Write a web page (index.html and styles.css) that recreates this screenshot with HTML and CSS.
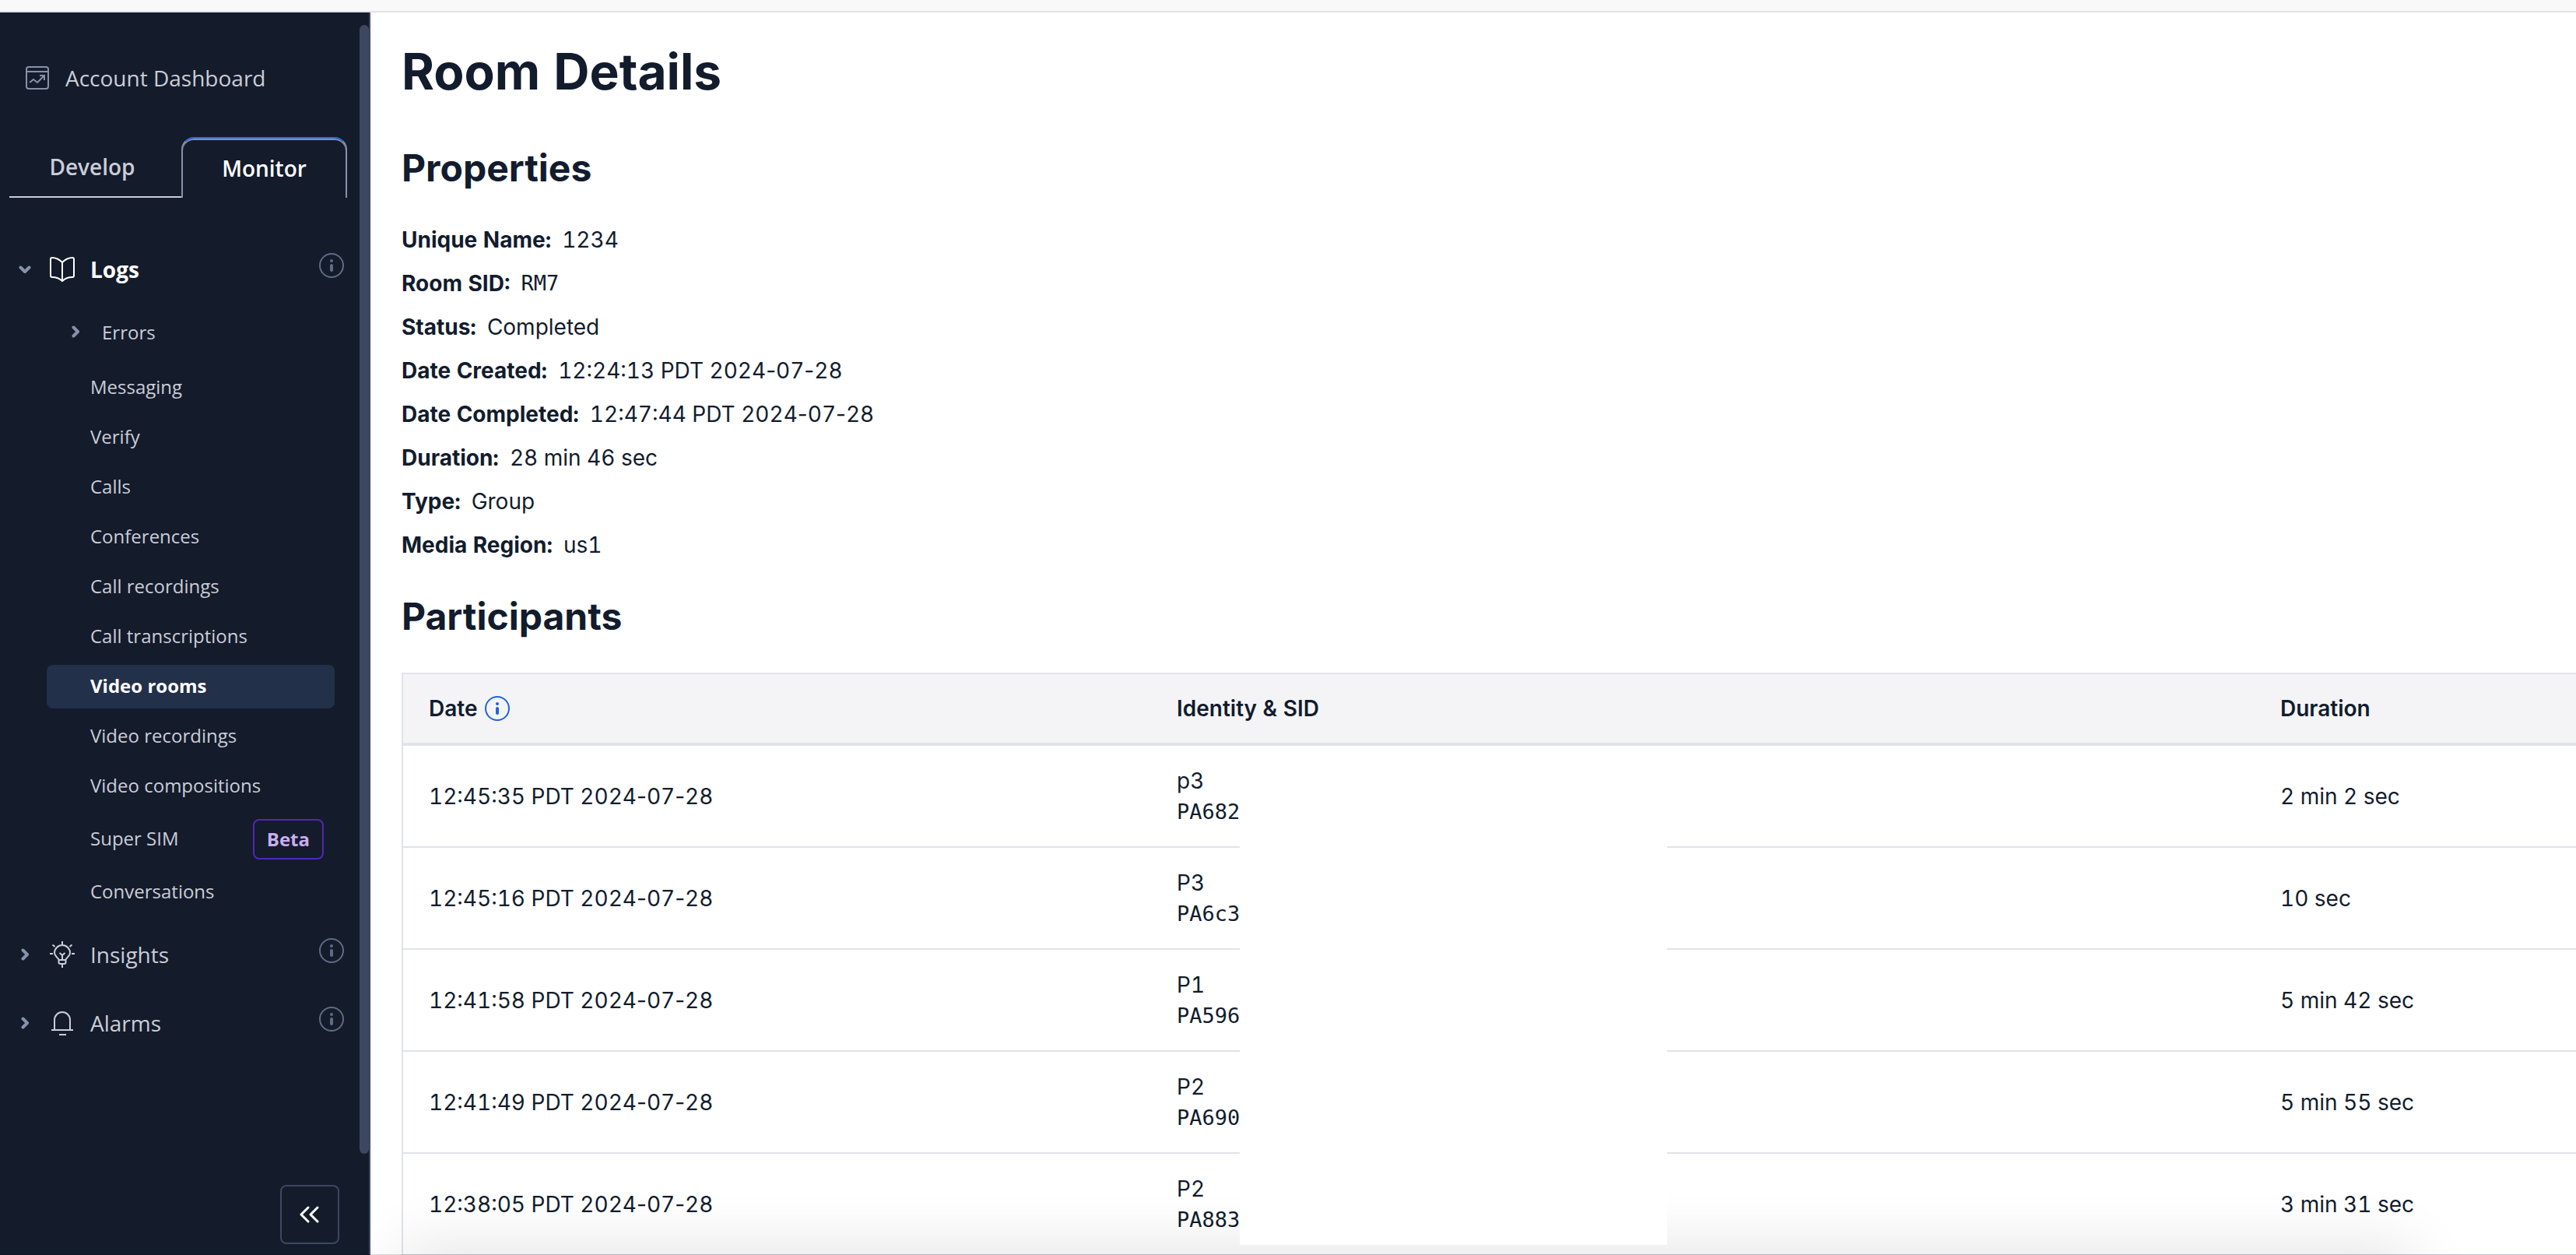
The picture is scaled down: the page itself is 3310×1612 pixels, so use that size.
FILE: index.html
```html
<!DOCTYPE html>
<html lang="en">
<head>
<meta charset="utf-8">
<title>Room Details</title>
<link rel="stylesheet" href="styles.css">
</head>
<body>
<svg class="sprite" aria-hidden="true">
  <symbol id="chevron" viewBox="0 0 16 16"><path d="M5.500 2.500L11 8l-5.500 5.500" fill="none" stroke="currentColor" stroke-width="4" stroke-linecap="round" stroke-linejoin="round"/></symbol>
  <symbol id="info" viewBox="0 0 32 32"><circle cx="16" cy="16" r="15" fill="none" stroke="currentColor" stroke-width="2"/><circle cx="16" cy="10" r="2" fill="currentColor"/><rect x="14" y="14" width="4" height="10" rx="2" fill="currentColor"/></symbol>
</svg>
<header class="topbar"></header>
<div class="layout">
  <nav class="sidebar">
    <a class="dashboard" href="#">
      <svg class="icon-dashboard" viewBox="0 0 30 30" fill="none" stroke="currentColor" stroke-width="2"><rect x="1" y="1" width="28" height="28" rx="3"/><path d="M1 7h28M5 21l5-4 5 4 9-9M18 12h6v6"/></svg>
      Account Dashboard
    </a>
    <div class="tabs" role="tablist">
      <button class="tab" role="tab">Develop</button>
      <button class="tab tab-active" role="tab" aria-selected="true">Monitor</button>
    </div>
    <div class="group group-open">
      <button class="group-name"><svg class="chevron chevron-down"><use href="#chevron"/></svg>
        <svg class="group-icon" viewBox="0 0 32 32" fill="none" stroke="currentColor" stroke-width="2" stroke-linejoin="round"><path d="M16 7C12 3 7 1 3 1Q1 1 1 3v21q0 2 2 2c5 0 9 1 13 5 4-4 8-5 13-5q2 0 2-2V3q0-2-2-2c-4 0-9 2-13 6zv24"/></svg>
        Logs</button>
      <button class="info" aria-label="About logs"><svg><use href="#info"/></svg></button>
    </div>
    <ul class="links">
      <li><button class="sub"><svg class="chevron"><use href="#chevron"/></svg>Errors</button></li>
      <li><a href="#">Messaging</a></li>
      <li><a href="#">Verify</a></li>
      <li><a href="#">Calls</a></li>
      <li><a href="#">Conferences</a></li>
      <li><a href="#">Call recordings</a></li>
      <li><a href="#">Call transcriptions</a></li>
      <li><a class="current" href="#" aria-current="page">Video rooms</a></li>
      <li><a href="#">Video recordings</a></li>
      <li><a href="#">Video compositions</a></li>
      <li class="with-badge"><a href="#">Super SIM</a><span class="badge">Beta</span></li>
      <li><a href="#">Conversations</a></li>
    </ul>
    <div class="group">
      <button class="group-name"><svg class="chevron"><use href="#chevron"/></svg>
        <svg class="group-icon" viewBox="0 0 32 34" fill="none" stroke="currentColor" stroke-width="2"><path d="M11.500 24c0-3-5.500-4-5.500-9a10 10 0 0 1 20 0c0 5-5.500 6-5.500 9zM11.500 24v3q0 2 2 2h5q2 0 2-2v-3M16 24v-6M12.500 15l3.500 3 3.500-3M16 0v4M16 29v5M0 16h4M28 16h4M3.500 4.500L6.500 7M28.500 4.500L25.500 7"/></svg>
        Insights</button>
      <button class="info" aria-label="About insights"><svg><use href="#info"/></svg></button>
    </div>
    <div class="group">
      <button class="group-name"><svg class="chevron"><use href="#chevron"/></svg>
        <svg class="group-icon" viewBox="0 0 32 34" fill="none" stroke="currentColor" stroke-width="2"><path d="M6 25V13a10 10 0 0 1 20 0v12M2 26h28M12 32h9"/></svg>
        Alarms</button>
      <button class="info" aria-label="About alarms"><svg><use href="#info"/></svg></button>
    </div>
    <button class="collapse" aria-label="Collapse navigation"><svg viewBox="0 0 26 22" fill="none" stroke="currentColor" stroke-width="3" stroke-linecap="round" stroke-linejoin="round"><path d="M11 2L2 11l9 9M23 2l-9 9 9 9"/></svg></button>
    <div class="scroll-thumb"></div>
  </nav>
  <main class="main">
    <h1>Room Details</h1>
    <h2>Properties</h2>
    <dl class="properties">
      <div><dt>Unique Name:</dt><dd>1234</dd></div>
      <div><dt>Room SID:</dt><dd class="sid">RM7</dd></div>
      <div><dt>Status:</dt><dd>Completed</dd></div>
      <div><dt>Date Created:</dt><dd>12:24:13 PDT 2024<span class="dash">-</span>07<span class="dash">-</span>28</dd></div>
      <div><dt>Date Completed:</dt><dd>12:47:44 PDT 2024<span class="dash">-</span>07<span class="dash">-</span>28</dd></div>
      <div><dt>Duration:</dt><dd>28 min 46 sec</dd></div>
      <div><dt>Type:</dt><dd>Group</dd></div>
      <div><dt>Media Region:</dt><dd>us1</dd></div>
    </dl>
    <h2>Participants</h2>
    <table class="participants">
      <colgroup><col class="col-date"><col class="col-identity"><col></colgroup>
      <thead>
        <tr><th scope="col"><span class="th-info">Date <svg class="th-icon"><use href="#info"/></svg></span></th><th scope="col">Identity &amp; SID</th><th scope="col">Duration</th></tr>
      </thead>
      <tbody>
        <tr><td>12:45:35 PDT 2024<span class="dash">-</span>07<span class="dash">-</span>28</td><td>p3<span class="sid">PA682</span></td><td>2 min 2 sec</td></tr>
        <tr><td>12:45:16 PDT 2024<span class="dash">-</span>07<span class="dash">-</span>28</td><td>P3<span class="sid">PA6c3</span></td><td>10 sec</td></tr>
        <tr><td>12:41:58 PDT 2024<span class="dash">-</span>07<span class="dash">-</span>28</td><td>P1<span class="sid">PA596</span></td><td>5 min 42 sec</td></tr>
        <tr><td>12:41:49 PDT 2024<span class="dash">-</span>07<span class="dash">-</span>28</td><td>P2<span class="sid">PA690</span></td><td>5 min 55 sec</td></tr>
        <tr><td>12:38:05 PDT 2024<span class="dash">-</span>07<span class="dash">-</span>28</td><td>P2<span class="sid">PA883</span></td><td>3 min 31 sec</td></tr>
      </tbody>
    </table>
    <div class="bottom-shade"></div>
    <div class="redaction"></div>
  </main>
</div>
<div class="bottom-edge"></div>
</body>
</html>
```

FILE: styles.css
```css
* { box-sizing: border-box; }

body {
  margin: 0;
  height: 100vh;
  display: flex;
  flex-direction: column;
  position: relative;
  overflow: hidden;
  background: #fff;
  color: #121c2d;
  font-family: Inter, sans-serif;
  font-size: 28px;
  font-variant-numeric: tabular-nums;
}

button {
  padding: 0;
  border: 0;
  background: none;
  color: inherit;
  font: inherit;
  cursor: pointer;
}

a { color: inherit; text-decoration: none; }
svg { display: block; flex: none; }
.sprite { position: absolute; width: 0; height: 0; }

.topbar {
  flex: none;
  height: 16px;
  background: #f9f9f9;
  border-bottom: 2px solid #e1e3ea;
}

.layout {
  flex: 1;
  min-height: 0;
  display: grid;
  grid-template-columns: 476px minmax(0, 1fr);
}

/* Sidebar */
.sidebar {
  position: relative;
  display: flex;
  flex-direction: column;
  min-height: 0;
  padding: 56px 28px 14px 12px;
  background: #141b2b;
  border-right: 2px solid #3d4760;
  color: #cacdd8;
  font-family: "Open Sans", "Noto Sans", sans-serif;
}

.dashboard {
  display: flex;
  align-items: center;
  gap: 21px;
  height: 56px;
  margin-bottom: 48px;
  padding-left: 21px;
}

.icon-dashboard { width: 30px; height: 30px; color: #8891aa; }

.tabs { display: flex; height: 78px; flex: none; margin-bottom: 48px; }

.tab {
  flex: 1;
  padding-right: 8px;
  border-bottom: 2px solid #cacdd8;
  font-weight: 600;
}

.tab-active {
  flex: none;
  width: 213px;
  padding: 0;
  border: 2px solid #8891aa;
  border-top-color: #2b6de5;
  border-bottom: 0;
  border-radius: 16px 16px 0 0;
  box-shadow: inset 0 2px 0 #8891aa;
  color: #fff;
}

.group {
  display: flex;
  flex: none;
  align-items: center;
  justify-content: space-between;
  height: 88px;
  padding: 0 4px 0 12px;
}

.group-name { display: flex; align-items: center; gap: 20px; }
.group-open .group-name { color: #fff; font-weight: 700; }
.group-name .chevron { margin-right: 4px; }
.chevron { width: 16px; height: 16px; color: #8891aa; }
.chevron-down { transform: rotate(90deg); }
.group-icon { width: 32px; height: 34px; }
.info { margin-bottom: 10px; color: #606b85; }
.info svg { width: 32px; height: 32px; }

.links {
  display: flex;
  flex-direction: column;
  gap: 8px;
  margin: 0 16px 8px 48px;
  padding: 0;
  list-style: none;
  font-size: 24px;
}

.links a {
  display: block;
  height: 56px;
  padding-left: 56px;
  border-radius: 8px;
  line-height: 54px;
}

.links .current { background: #22304a; color: #fff; font-weight: 700; }

.sub { display: flex; align-items: center; gap: 26px; height: 72px; padding-left: 29px; }

.with-badge { display: flex; align-items: center; justify-content: space-between; height: 64px; padding-right: 14px; }

.badge {
  padding: 0 16px;
  border: 2px solid #5127b5;
  border-radius: 8px;
  color: #c9aef0;
  font-weight: 700;
  line-height: 48px;
}

.collapse {
  display: grid;
  place-items: center;
  width: 76px;
  height: 76px;
  margin: auto 10px 0 auto;
  border: 2px solid #3d4760;
  border-radius: 8px;
  color: #fff;
}

.collapse svg { width: 26px; height: 22px; }

.scroll-thumb {
  position: absolute;
  top: 16px;
  right: 0;
  bottom: 130px;
  width: 12px;
  border-radius: 6px;
  background: #3d4760;
}

/* Room details */
.main {
  position: relative;
  min-height: 0;
  padding: 36px 0 0 40px;
  overflow: hidden;
}

h1 { margin: 0 0 52px; font-size: 64px; line-height: 80px; }
h2 { margin: 0 0 32px; font-size: 48px; line-height: 64px; }

.properties { margin: 0 0 32px; line-height: 56px; }
.properties div { display: flex; gap: 14px; }
.properties dt { font-weight: 700; }
.properties dd { margin: 0; }
.sid, .properties .sid { font-family: "DejaVu Sans Mono", monospace; font-size: 27px; }

/* Tabular figures would widen the dashes of a date too */
.dash { font-variant-numeric: normal; }

.participants {
  width: 100%;
  margin-top: 40px;
  border: 2px solid #e1e3ea;
  border-right: 0;
  border-spacing: 0;
  table-layout: fixed;
  line-height: 40px;
  text-align: left;
}

.col-date { width: 961px; }
.col-identity { width: 1418px; }

.participants th {
  height: 92px;
  padding: 0 33px;
  background: #f4f4f6;
  border-bottom: 4px solid #e1e3ea;
  font-weight: 600;
}

.participants td {
  height: 131px;
  padding: 0 33px;
  border-bottom: 2px solid #e1e3ea;
}

.participants .sid { display: block; }
.th-info { display: flex; align-items: center; gap: 10px; }
.th-icon { width: 32px; height: 32px; color: #1f63e0; }

/* Shade cast over the end of the page */
.bottom-shade {
  position: absolute;
  top: 100%;
  left: 48px;
  right: 220px;
  height: 60px;
  box-shadow: 0 0 80px 10px rgba(0, 0, 0, 0.11);
}

/* Cover over the hidden part of the SIDs */
.redaction {
  position: absolute;
  top: 984px;
  bottom: 13px;
  left: 1117px;
  width: 549px;
  background: #fff;
}

.bottom-edge {
  position: absolute;
  right: 0;
  bottom: 0;
  left: 0;
  height: 1px;
  background: rgba(0, 0, 0, 0.15);
}
```
